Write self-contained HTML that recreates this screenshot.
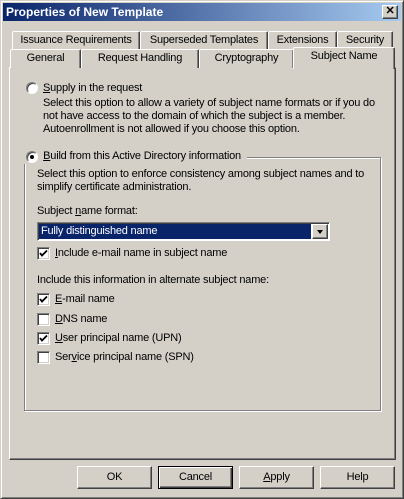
<!DOCTYPE html>
<html><head><style>
*{margin:0;padding:0;box-sizing:border-box}
body{width:404px;height:499px;background:#d4d0c8;font-family:"Liberation Sans",sans-serif;font-size:11px;letter-spacing:-0.2px;color:#000;position:relative;overflow:hidden}
.a{position:absolute;white-space:nowrap;line-height:13px}
.win{position:absolute;left:0;top:0;width:404px;height:499px;border:1px solid;border-color:#d4d0c8 #404040 #404040 #d4d0c8;box-shadow:inset 1px 1px 0 #fff,inset -1px -1px 0 #808080}
.title{position:absolute;left:3px;top:3px;width:398px;height:18px;background:linear-gradient(to right,#0a246a,#a6caf0);color:#fff;font-weight:bold;font-size:12px;letter-spacing:0;line-height:18px;padding-left:3px}
.close{position:absolute;left:382px;top:5px;width:16px;height:14px;background:#d4d0c8;border:1px solid;border-color:#fff #404040 #404040 #fff;box-shadow:inset -1px -1px 0 #808080;font-weight:bold;font-size:11px;line-height:11px;text-align:center;color:#000}
.tab{position:absolute;height:19px;border:1px solid;border-bottom:none;border-color:#fff #404040 #fff #fff;box-shadow:inset -1px 0 0 #808080;border-radius:2px 2px 0 0;text-align:center;line-height:17px;background:#d4d0c8}
.panel{position:absolute;left:9px;top:67px;width:387px;height:393px;border:1px solid;border-color:#fff #404040 #404040 #fff;box-shadow:inset -1px -1px 0 #808080}
.radio{position:absolute;width:12px;height:12px;border-radius:50%;background:#fff;border:1px solid;border-color:#808080 #fff #fff #808080;box-shadow:inset 1px 1px 0 #404040}
.radio.on::after{content:"";position:absolute;left:3px;top:3px;width:4px;height:4px;border-radius:50%;background:#000}
.cb{position:absolute;width:13px;height:13px;background:#fff;border:1px solid;border-color:#808080 #fff #fff #808080;box-shadow:inset 1px 1px 0 #404040,inset -1px -1px 0 #d4d0c8}
.grp{position:absolute;left:24px;top:157px;width:357px;height:254px;border:1px solid #808080;box-shadow:1px 1px 0 #fff,inset 1px 1px 0 #fff}
.btn{position:absolute;top:466px;width:75px;height:23px;border:1px solid;border-color:#fff #404040 #404040 #fff;box-shadow:inset -1px -1px 0 #808080;text-align:center;line-height:20px}
u{text-decoration:underline}
</style></head><body>
<div class="win"></div>
<div class="title">Properties of New Template</div>
<div class="close">✕</div>

<div class="tab" style="left:12px;top:31px;width:128px">Issuance Requirements</div>
<div class="tab" style="left:140px;top:31px;width:128px">Superseded Templates</div>
<div class="tab" style="left:268px;top:31px;width:69px">Extensions</div>
<div class="tab" style="left:337px;top:31px;width:56px">Security</div>
<div class="panel"></div>
<div class="tab" style="left:10px;top:49px;width:71px">General</div>
<div class="tab" style="left:81px;top:49px;width:118px">Request Handling</div>
<div class="tab" style="left:199px;top:49px;width:95px">Cryptography</div>
<div class="tab" style="left:293px;top:47px;width:102px;height:22px;line-height:17px;border-bottom:none;z-index:2">Subject Name</div>

<div class="radio" style="left:26px;top:82px"></div>
<div class="a" style="left:43px;top:82px"><u>S</u>upply in the request</div>
<div class="a" style="left:43px;top:97px">Select this option to allow a variety of subject name formats or if you do</div>
<div class="a" style="left:43px;top:110px">not have access to the domain of which the subject is a member.</div>
<div class="a" style="left:43px;top:123px">Autoenrollment is not allowed if you choose this option.</div>

<div class="grp"></div>
<div class="a" style="left:24px;top:150px;background:#d4d0c8;padding:0 6px 0 2px;height:14px">&nbsp;&nbsp;&nbsp;&nbsp;&nbsp;&nbsp;<u>B</u>uild from this Active Directory information</div>
<div class="radio on" style="left:26px;top:151px"></div>
<div class="a" style="left:37px;top:168px">Select this option to enforce consistency among subject names and to</div>
<div class="a" style="left:37px;top:181px">simplify certificate administration.</div>
<div class="a" style="left:37px;top:205px">Subject <u>n</u>ame format:</div>
<div style="position:absolute;left:37px;top:222px;width:293px;height:19px;background:#fff;border:1px solid;border-color:#808080 #fff #fff #808080;box-shadow:inset 1px 1px 0 #404040"></div>
<div class="a" style="left:39px;top:224px;width:272px;height:15px;background:#0a246a;color:#fff;line-height:15px;padding-left:2px">Fully distinguished name</div>
<div style="position:absolute;left:312px;top:224px;width:16px;height:15px;background:#d4d0c8;border:1px solid;border-color:#fff #404040 #404040 #fff;box-shadow:inset -1px -1px 0 #808080"><div style="position:absolute;left:4px;top:5px;width:0;height:0;border-left:3.5px solid transparent;border-right:3.5px solid transparent;border-top:4px solid #000"></div></div>
<div class="cb" style="left:37px;top:247px"><svg width="11" height="11" style="position:absolute;left:0;top:0"><path d="M2 5 L4 7.5 L9 2.5" stroke="#000" stroke-width="1.8" fill="none"/></svg></div>
<div class="a" style="left:55px;top:247px"><u>I</u>nclude e-mail name in subject name</div>
<div class="a" style="left:37px;top:274px">Include this information in alternate subject name:</div>
<div class="cb" style="left:37px;top:293px"><svg width="11" height="11" style="position:absolute;left:0;top:0"><path d="M2 5 L4 7.5 L9 2.5" stroke="#000" stroke-width="1.8" fill="none"/></svg></div>
<div class="a" style="left:55px;top:293px"><u>E</u>-mail name</div>
<div class="cb" style="left:37px;top:313px"></div>
<div class="a" style="left:55px;top:313px"><u>D</u>NS name</div>
<div class="cb" style="left:37px;top:332px"><svg width="11" height="11" style="position:absolute;left:0;top:0"><path d="M2 5 L4 7.5 L9 2.5" stroke="#000" stroke-width="1.8" fill="none"/></svg></div>
<div class="a" style="left:55px;top:332px"><u>U</u>ser principal name (UPN)</div>
<div class="cb" style="left:37px;top:351px"></div>
<div class="a" style="left:55px;top:351px">Ser<u>v</u>ice principal name (SPN)</div>

<div class="btn" style="left:77px">OK</div>
<div class="btn" style="left:158px;border:1px solid #000;box-shadow:inset 1px 1px 0 #fff,inset -1px -1px 0 #404040,inset -2px -2px 0 #808080">Cancel</div>
<div class="btn" style="left:239px"><u>A</u>pply</div>
<div class="btn" style="left:320px">Help</div>
</body></html>
